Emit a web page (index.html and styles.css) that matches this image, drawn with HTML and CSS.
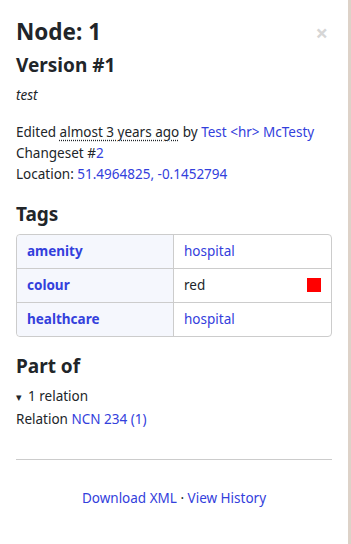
FILE: index.html
```html
<!DOCTYPE html>
<html lang="en">
<head>
    <meta charset="UTF-8">
    <meta name="viewport" content="width=device-width, initial-scale=1.0">
    <title>Node: 1</title>
    <link rel="stylesheet" href="styles.css">
</head>
<body>
    <div class="layout">
        <div class="sidebar">
            <div class="title-row">
                <h1>Node: 1</h1>
                <a class="close" href="#">&times;</a>
            </div>
            <h2>Version #1</h2>
            <p class="comment">test</p>
            <p class="details">
                Edited <abbr title="2021">almost 3 years ago</abbr> by <a href="#">Test &lt;hr&gt; McTesty</a><br>
                Changeset #<a href="#">2</a><br>
                Location: <a href="#">51.4964825, -0.1452794</a>
            </p>

            <h2>Tags</h2>
            <table class="tags">
                <tr>
                    <th><a href="#">amenity</a></th>
                    <td><a href="#">hospital</a></td>
                </tr>
                <tr>
                    <th><a href="#">colour</a></th>
                    <td><div class="colour-cell">red <span class="swatch"></span></div></td>
                </tr>
                <tr>
                    <th><a href="#">healthcare</a></th>
                    <td><a href="#">hospital</a></td>
                </tr>
            </table>

            <h2>Part of</h2>
            <details open>
                <summary>1 relation</summary>
                <div class="relation">Relation <a href="#">NCN 234 (1)</a></div>
            </details>

            <hr>
            <div class="footer-links">
                <a href="#">Download XML</a> &middot; <a href="#">View History</a>
            </div>
        </div>
        <div class="map"></div>
    </div>
</body>
</html>
```

FILE: styles.css
```css
body {
    font-family: "Noto Sans", "Open Sans", sans-serif;
    font-size: 13.5px;
    line-height: 21px;
    color: #212529;
    margin: 0;
    background: #fff;
}
a {
    color: #3340dc;
    text-decoration: none;
}
.layout {
    display: flex;
    height: 544px;
}
.sidebar {
    width: 348px;
    box-sizing: border-box;
    padding: 18px 16px 0 16px;
}
.map {
    flex: 1;
    background: #ddd2c8;
}
.title-row {
    display: flex;
    justify-content: space-between;
    align-items: flex-start;
}
h1 {
    font-size: 22.5px;
    font-weight: 700;
    line-height: 1.2;
    margin: 0 0 9px;
}
.close {
    color: #d6d6d6;
    font-size: 22px;
    font-weight: 700;
    line-height: 1;
    margin: 3px 4px 0 0;
}
h2 {
    font-size: 19px;
    font-weight: 700;
    line-height: 1.2;
    margin: 0 0 8px;
}
.comment {
    font-style: italic;
    margin: 0 0 16px;
}
.details {
    margin: 0 0 18px;
}
abbr {
    text-decoration: underline dotted;
    text-underline-offset: 3px;
}
.tags {
    width: 100%;
    border-collapse: separate;
    border-spacing: 0;
    border: 1px solid #ccc;
    border-radius: 4px;
    margin: 0 0 18px;
}
.tags th, .tags td {
    width: 50%;
    text-align: left;
    padding: 6px 10px;
    height: 21px;
    border-top: 1px solid #ccc;
}
.tags tr:first-child th, .tags tr:first-child td {
    border-top: none;
}
.tags th {
    background: #f5f7fd;
    border-right: 1px solid #ccc;
    font-weight: 700;
}
.tags tr:first-child th { border-top-left-radius: 4px; }
.tags tr:last-child th { border-bottom-left-radius: 4px; }
.colour-cell {
    display: flex;
    justify-content: space-between;
    align-items: center;
}
.swatch {
    width: 14px;
    height: 14px;
    background: #f00;
}
details {
    margin: 0 0 29px;
}
summary {
    cursor: pointer;
    list-style: none;
    padding-top: 1px;
}
summary::before {
    content: "\25BE";
    font-size: 11px;
    margin-right: 6px;
}
.relation {
    padding-top: 2px;
}
hr {
    border: none;
    border-top: 1px solid #ccc;
    margin: 0 0 28px;
}
.footer-links {
    text-align: center;
}
```
